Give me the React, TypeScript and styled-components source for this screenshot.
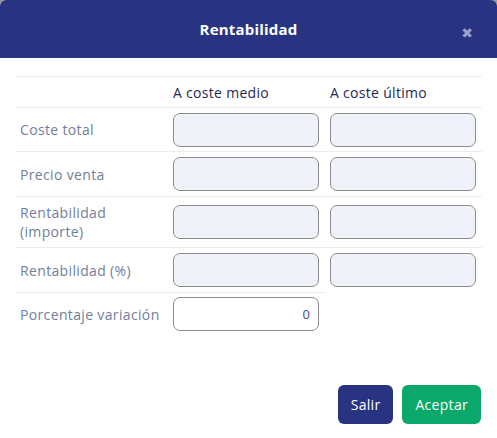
import React from "react";
import styled, { createGlobalStyle } from "styled-components";

const Global = createGlobalStyle`
  html, body { margin: 0; padding: 0; background: #9a9a9a; }
  body { font-family: "Open Sans", "Liberation Sans", sans-serif; }
`;

const Modal = styled.div`
  width: 497px;
  height: 446px;
  background: #ffffff;
  border-radius: 6px 6px 0 0;
  overflow: hidden;
  display: flex;
  flex-direction: column;
`;

const Header = styled.div`
  height: 58px;
  background: #283482;
  display: flex;
  align-items: center;
  justify-content: center;
  position: relative;
  flex-shrink: 0;
`;

const Title = styled.h1`
  margin: 0;
  color: #ffffff;
  font-size: 15px;
  font-weight: 700;
  letter-spacing: 0.2px;
`;

const Close = styled.span`
  position: absolute;
  right: 24px;
  top: 26px;
  color: #9aa1cc;
  font-size: 14px;
  line-height: 1;
  font-family: "DejaVu Sans", sans-serif;
  font-weight: bold;
`;

const Body = styled.div`
  padding: 18px 15px 0 15px;
  flex: 1;
  display: flex;
  flex-direction: column;
`;

const Table = styled.table`
  width: 467px;
  border-collapse: collapse;
  table-layout: fixed;
`;

const Cell = styled.td<{ $h?: number }>`
  border-top: 1px solid #e8edf4;
  padding: 0 5px;
  height: ${(p) => p.$h ?? 43}px;
  vertical-align: middle;
`;

const HeadCell = styled.th`
  border-top: 1px solid #e8edf4;
  padding: 0 5px;
  height: 30px;
  text-align: left;
  font-size: 14px;
  font-weight: 500;
  letter-spacing: 0.3px;
  color: #1f2852;
`;

const Label = styled.span`
  display: block;
  font-size: 14px;
  letter-spacing: 0.35px;
  line-height: 19px;
  color: #70809c;
`;

const Field = styled.input<{ $readonly?: boolean }>`
  box-sizing: border-box;
  width: 146px;
  height: 34px;
  border: 1px solid #8c8c8c;
  border-radius: 7px;
  background: ${(p) => (p.$readonly ? "#eff3f9" : "#ffffff")};
  font-family: inherit;
  font-size: 13px;
  color: #3b4a7c;
  text-align: right;
  padding: 0 8px;
  outline: none;
  display: block;
`;

const Footer = styled.div`
  margin-top: auto;
  padding: 0 1px 22px 0;
  display: flex;
  justify-content: flex-end;
  gap: 9px;
`;

const Button = styled.button<{ $variant: "primary" | "success" }>`
  height: 39px;
  padding: 0 13px;
  border: none;
  border-radius: 6px;
  background: ${(p) => (p.$variant === "primary" ? "#283482" : "#0aa86a")};
  color: #ffffff;
  font-family: inherit;
  font-size: 14px;
  letter-spacing: 0.3px;
  font-weight: 500;
`;

const rows: { label: React.ReactNode; h: number; both: boolean; value?: string }[] = [
  { label: "Coste total", h: 43, both: true },
  { label: "Precio venta", h: 44, both: true },
  { label: <>Rentabilidad<br />(importe)</>, h: 50, both: true },
  { label: "Rentabilidad (%)", h: 44, both: true },
  { label: "Porcentaje variación", h: 42, both: false, value: "0" },
];

export default function App() {
  return (
    <>
      <Global />
      <Modal>
        <Header>
          <Title>Rentabilidad</Title>
          <Close>✖</Close>
        </Header>
        <Body>
          <Table>
            <colgroup>
              <col style={{ width: 153 }} />
              <col style={{ width: 157 }} />
              <col style={{ width: 157 }} />
            </colgroup>
            <thead>
              <tr>
                <HeadCell />
                <HeadCell>A coste medio</HeadCell>
                <HeadCell>A coste último</HeadCell>
              </tr>
            </thead>
            <tbody>
              {rows.map((r, i) => (
                <tr key={i}>
                  <Cell $h={r.h}>
                    <Label>{r.label}</Label>
                  </Cell>
                  {r.both ? (
                    <>
                      <Cell $h={r.h}>
                        <Field $readonly readOnly defaultValue="" />
                      </Cell>
                      <Cell $h={r.h}>
                        <Field $readonly readOnly defaultValue="" />
                      </Cell>
                    </>
                  ) : (
                    <Cell $h={r.h}>
                      <Field defaultValue={r.value} />
                    </Cell>
                  )}
                </tr>
              ))}
            </tbody>
          </Table>
          <Footer>
            <Button $variant="primary">Salir</Button>
            <Button $variant="success">Aceptar</Button>
          </Footer>
        </Body>
      </Modal>
    </>
  );
}
